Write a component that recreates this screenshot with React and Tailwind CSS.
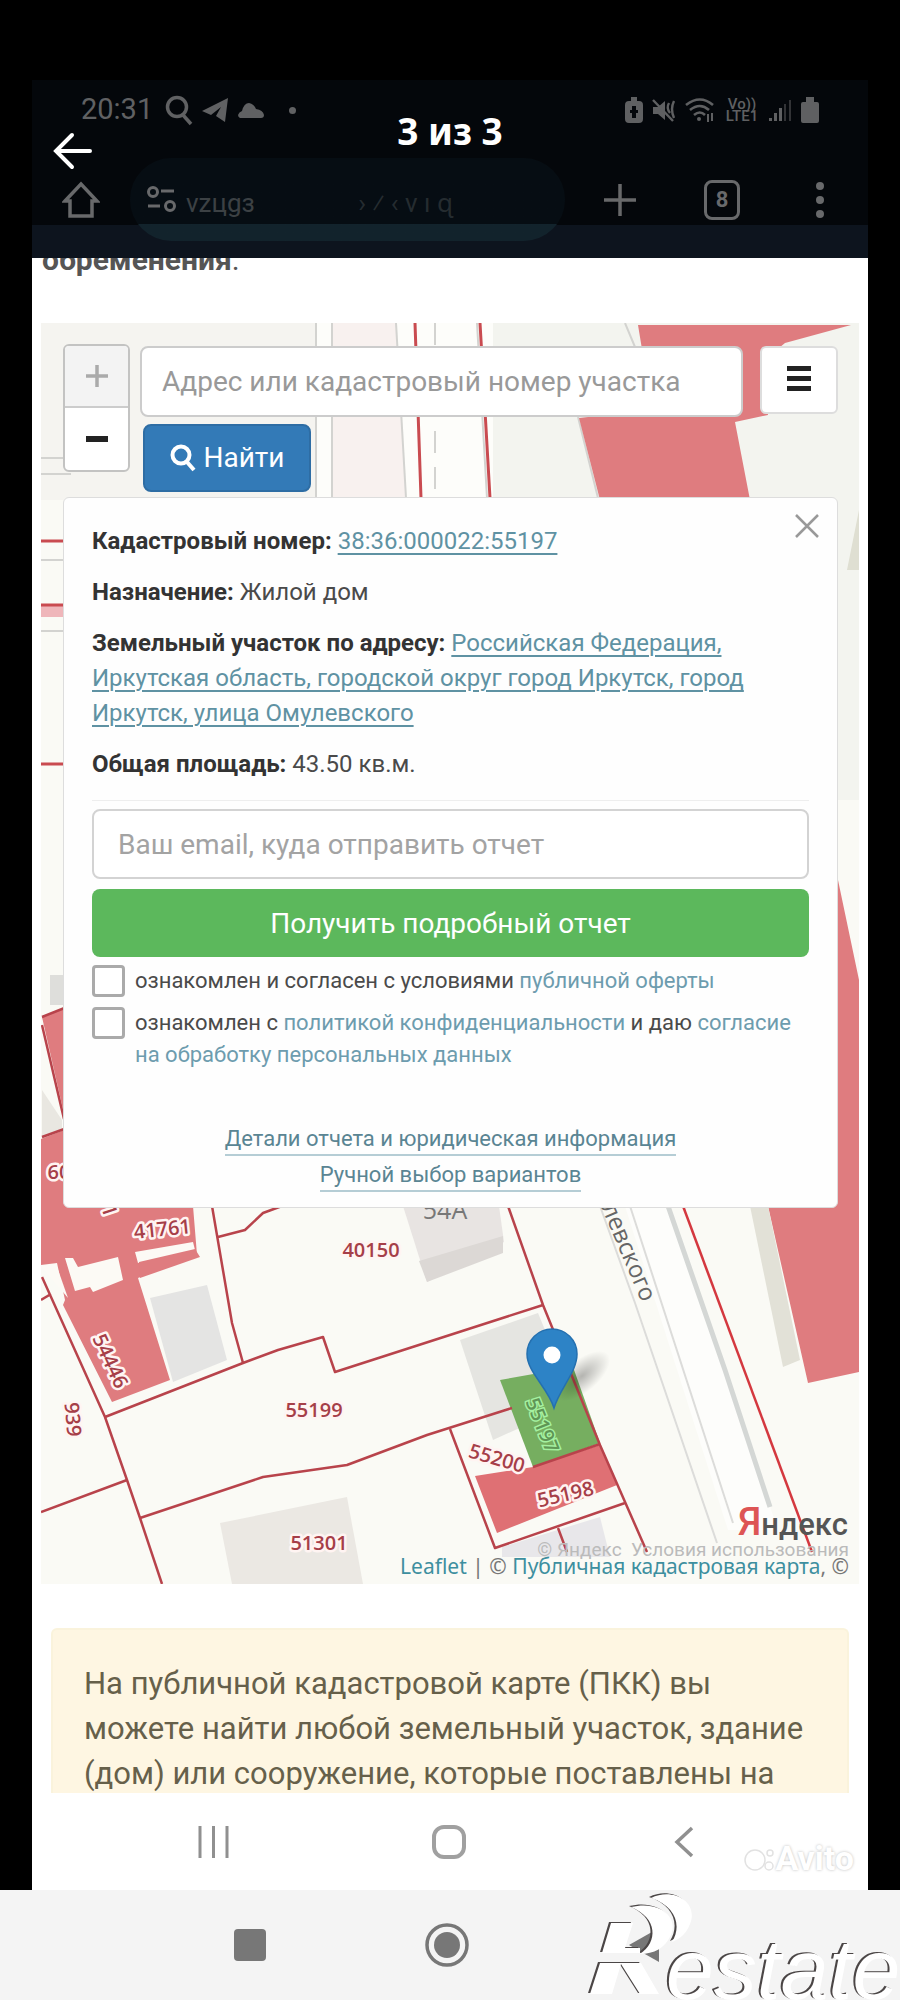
import React from "react";

function StatusIcons() {
  return (
    <div className="flex items-center gap-2 text-[#5f6062]">
      <svg className="h-7 w-5" viewBox="0 0 20 28" fill="currentColor" aria-hidden="true">
        <path fillRule="evenodd" d="M7 1h6v4h2q4 0 4 4v14q0 4-4 4H5q-4 0-4-4V9q0-4 4-4h2zM8 10v4H6v3h2v5h4v-5h2v-3h-2v-4z" />
      </svg>
      <svg className="h-7 w-6" viewBox="0 0 24 28" fill="currentColor" aria-hidden="true">
        <path d="M1 11h5l7-6v19l-7-6H1z" />
        <path d="M1 4l20 21M17 7q-3 5 1 10M22 5q-4 8 0 17" stroke="currentColor" strokeWidth="2.4" fill="none" />
      </svg>
      <svg className="h-7 w-8" viewBox="0 0 32 28" fill="none" stroke="currentColor" strokeWidth="2.6" aria-hidden="true">
        <path d="M2 9q14-11 27 0M6 14q10-8 19 0M10 19q6-5 11 0" />
        <circle cx="15" cy="23" r="2" fill="currentColor" stroke="none" />
        <path d="M24 18v8M28 17v8" strokeWidth="2" />
      </svg>
      <span className="w-9 text-center text-[15px] leading-3 font-medium">Vo)) LTE1</span>
      <svg className="h-6 w-6" viewBox="0 0 24 24" fill="currentColor" aria-hidden="true">
        <path d="M1 20h3v3H1zM6 15h3v8H6zM11 10h3v13h-3z" />
        <path d="M16 6h2v17h-2zM21 2h2v21h-2z" opacity=".5" />
      </svg>
      <svg className="h-7 w-5" viewBox="0 0 20 28" fill="currentColor" aria-hidden="true">
        <path d="M6 1h8v5h3q2 0 2 2v17q0 2-2 2H3q-2 0-2-2V8q0-2 2-2h3z" />
      </svg>
    </div>
  );
}

function PhoneHeader() {
  return (
    <header className="relative mx-8 h-[258px] bg-black pt-[84px]">
      <div className="absolute inset-x-0 bottom-0 h-[33px] bg-[#0d141e]" />
      <div className="absolute inset-x-0 top-20 bottom-[33px] bg-[#04070b]" />
      <div className="relative flex h-[52px] items-center justify-between pr-12 pl-[49px] text-[#606163]">
        <div className="flex items-center gap-2">
          <span className="mr-1 text-[29px]">20:31</span>
          <svg className="h-8 w-7" viewBox="0 0 28 32" fill="none" stroke="currentColor" strokeWidth="3.5" aria-hidden="true">
            <circle cx="12" cy="13" r="9.500" />
            <path d="M18 21l8 9" />
          </svg>
          <svg className="h-7 w-7" viewBox="0 0 28 28" fill="currentColor" aria-hidden="true">
            <path d="M1 15L27 2l-3 24-9-6 5-9-10 8z" />
          </svg>
          <svg className="h-6 w-7" viewBox="0 0 28 24" fill="currentColor" aria-hidden="true">
            <path d="M3 20q-2-1-2-3 1-3 4-4 2-8 7-8 5 1 7 6 7 1 8 6 0 3-3 3z" />
          </svg>
          <span className="ml-4 size-[7px] rounded-full bg-current" />
        </div>
        <StatusIcons />
      </div>
      <div className="relative mt-[22px] flex h-[83px] items-center pr-11 pl-[30px] text-[#68696b]">
        <button type="button" aria-label="Домой">
          <svg className="h-10 w-[38px]" viewBox="0 0 38 40" fill="none" stroke="currentColor" strokeWidth="3.5" aria-hidden="true">
            <path d="M3 21L19 4l16 17h-5v15H8V21z" />
          </svg>
        </button>
        <div className="ml-[30px] flex h-full w-[435px] items-center overflow-hidden rounded-[42px] bg-linear-to-b from-[#060d13] from-80% to-[#12232c] to-80% pl-4">
          <svg className="h-[30px] w-8 shrink-0" viewBox="0 0 32 30" fill="none" stroke="currentColor" strokeWidth="3" aria-hidden="true">
            <circle cx="7" cy="7" r="4.500" />
            <path d="M15 6h13M2 21h12" />
            <circle cx="24" cy="21" r="4.500" />
          </svg>
          <span className="mt-2 ml-2 text-[26px] text-[#3c4144]">vzцgз</span>
          <span className="mt-2 ml-auto pr-28 text-[26px] text-[#252c30]">› ⁄ ‹ v ı ɋ</span>
        </div>
        <div className="ml-auto flex items-center">
          <button type="button" aria-label="Новая вкладка" className="mr-[66px]">
            <svg className="size-9" viewBox="0 0 36 36" stroke="currentColor" strokeWidth="3.5" aria-hidden="true">
              <path d="M18 2v32M2 18h32" />
            </svg>
          </button>
          <button type="button" className="mr-[76px] flex h-10 w-9 items-center justify-center rounded-lg border-3 border-current text-[22px] font-bold">
            8
          </button>
          <button type="button" aria-label="Меню" className="flex flex-col gap-1.5">
            <span className="size-2 rounded-full bg-current" />
            <span className="size-2 rounded-full bg-current" />
            <span className="size-2 rounded-full bg-current" />
          </button>
        </div>
      </div>
      <div className="absolute inset-x-0 top-28 flex h-20 items-start justify-center">
        <button type="button" aria-label="Назад" className="absolute top-5 left-[21px] text-white">
          <svg className="h-10 w-10" viewBox="0 0 40 40" fill="none" stroke="currentColor" strokeWidth="4" strokeLinecap="round" aria-hidden="true">
            <path d="M37 19H4M19 3L3 19l16 16" />
          </svg>
        </button>
        <h1 className="font-['Noto_Sans','Open_Sans',sans-serif] text-[37px] leading-[38px] font-bold text-white">3 из 3</h1>
      </div>
    </header>
  );
}

function MapCanvas() {
  return (
    <svg
      className="absolute inset-0 h-full w-full"
      viewBox="41 323 818 1261"
      preserveAspectRatio="xMidYMin slice"
      fontFamily="'Open Sans','Noto Sans',sans-serif"
      aria-hidden="true"
    >
      <defs>
        <radialGradient id="pinShadow">
          <stop offset="0" stopColor="#000" stopOpacity=".28" />
          <stop offset="1" stopColor="#000" stopOpacity="0" />
        </radialGradient>
      </defs>
      <rect x="41" y="323" width="818" height="1261" fill="#fafaf5" />
      <path d="M41 323H316V500H41z" fill="#f5f4f0" />
      <path d="M492 323H859V800H492z" fill="#f3f4ef" />
      <path d="M316 323h16v177h-16zM397 323h96v177h-86z" fill="#fdfdfa" />
      <path d="M332 323h64l10 175h-74z" fill="#f8f1ef" />
      <g fill="none" stroke="#d3d3d0" strokeWidth="2">
        <path d="M316 323v177M332 323v177M396 323l10 175M477 323l10 175M41 458h30M41 474h30M41 560h30M41 631h30M625 323l10 24M578 417l20 81" />
        <path d="M435 323v175" strokeDasharray="22 14" />
      </g>
      <path d="M638 325H851L785 343 762 362 768 415 735 422 750 500H600L579 418 652 410z" fill="#df7c7f" />
      <path d="M859 510l-12 60h12z" fill="#dfdfd2" />
      <path d="M41 605h30v12H41z" fill="#efb6ba" />
      <g fill="none" stroke="#c94b50" strokeWidth="3">
        <path d="M415 323l6 175M480 323l10 175M41 541h30M41 605h30M41 764h30" />
      </g>

      <path d="M838 880L859 980V1372L808 1383 768 1206H830z" fill="#df7c7f" />
      <path d="M750 1206H768L800 1360 783 1367z" fill="#e2e1d7" />
      <path d="M625 1206H668L778 1530H728z" fill="#fdfdfb" />
      <g fill="none" stroke="#dcdcda" strokeWidth="2">
        <path d="M600 1206L635 1303 717 1543M630 1206L733 1523" />
      </g>
      <path d="M668 1206L725 1370 770 1507" fill="none" stroke="#d4d7d5" strokeWidth="5" />
      <path d="M683 1206L812 1552" fill="none" stroke="#d4383f" strokeWidth="2.5" />

      <path d="M50 975h20v30H50z" fill="#dededb" />
      <path d="M42 1090l20 30v30H42z" fill="#e9e7e1" />
      <path d="M42 1017l25-10v120z" fill="#df7c7f" />
      <path d="M41 1139l26-10v77h126l4 49-59 23 32 102-58 22-49-97 2-5-8-37-16 2z" fill="#df7c7f" />
      <path d="M65 1258h8l5 9 40-10 5 23-30 12-3-5-15 4zM135 1252l58-10 2 8-57 13z" fill="#fcfaf5" />
      <path d="M139 1262l56-13 5 8-60 21z" fill="#df7c7f" />
      <path d="M41 1266l15-2 12 34z" fill="#fcfaf5" />
      <path d="M150 1298L207 1285 227 1360 173 1382z" fill="#e4e4e3" />
      <path d="M403 1206H499L504 1242 427 1282z" fill="#e8e4e2" />
      <path d="M419 1261L503 1236V1253L427 1282z" fill="#dcd8d5" />
      <path d="M460 1340L538 1313 575 1403 493 1440z" fill="#e5e5e1" />
      <path d="M220 1523L347 1497 363 1584H232z" fill="#ebe8e3" />
      <path d="M502 1547l98-30 10 40H502z" fill="#e8e7ea" />
      <path d="M475 1476L533 1467 600 1445 617 1485 497 1533z" fill="#df7074" />
      <path d="M500 1380L573 1367 600 1443 533 1467z" fill="#76ae60" />

      <g fill="none" stroke="#b8434b" strokeWidth="2.5" strokeLinejoin="round">
        <path d="M42 1277L105 1417 127 1480 140 1518 162 1584M41 1300l10-6" />
        <path d="M105 1417L243 1363 278 1350 323 1337 335 1372 543 1305" />
        <path d="M212 1206L232 1323 243 1363M218 1237L245 1230 263 1213 282 1206" />
        <path d="M41 1512L127 1480M140 1518L263 1477 347 1465 427 1435 512 1408" />
        <path d="M508 1206L543 1305 600 1445 647 1552M450 1429L495 1548 625 1503M558 1528l9 24" />
        <path d="M42 1017l25-10M42 1137l25-9M42 1025l22 94M533 1467l67-23" />
      </g>

      <g fill="#a63e48" stroke="#fff4f2" strokeWidth="5" strokeLinejoin="round" paintOrder="stroke" fontSize="20" fontWeight="600" textAnchor="middle">
        <text x="371" y="1257">40150</text>
        <text x="314" y="1417">55199</text>
        <text x="319" y="1550">51301</text>
        <text x="163" y="1236" transform="rotate(-6 163 1236)">41761</text>
        <text transform="translate(104 1364) rotate(65)">54446</text>
        <text transform="translate(66 1420) rotate(85)">939</text>
        <text x="59" y="1179">60</text>
        <text transform="translate(101 1207) rotate(72)">41</text>
        <text transform="translate(495 1465) rotate(16)">55200</text>
        <text transform="translate(567 1501) rotate(-13)">55198</text>
      </g>
      <text transform="translate(536 1428) rotate(68)" fill="#5f9655" stroke="#a5f1a0" strokeWidth="3" paintOrder="stroke" fontSize="20" fontWeight="600" textAnchor="middle">55197</text>
      <text x="445" y="1219" fill="#777" fontSize="25" textAnchor="middle">54А</text>
      <text transform="translate(642 1303) rotate(67)" fill="#666" fontSize="24" textAnchor="end">улица Омулевского</text>

      <ellipse cx="582" cy="1376" rx="34" ry="16" fill="url(#pinShadow)" transform="rotate(-40 582 1376)" />
      <path d="M554 1408C548 1388 527 1372 527 1354a25 25 0 0 1 50 0C577 1372 560 1388 554 1408z" fill="#2d83c6" stroke="#2470b0" strokeWidth="1.500" />
      <circle cx="552" cy="1355" r="8.500" fill="#fff" />
      <text x="738" y="1535" fontFamily="Roboto,sans-serif" fontSize="31" fontWeight="500" fill="#555"><tspan fill="#dd5555" fontSize="38">Я</tspan>ндекс</text>
    </svg>
  );
}

function SearchBar() {
  return (
    <form className="relative flex items-start pt-[21px] pr-[21px] pl-[22px]" onSubmit={(e) => e.preventDefault()}>
      <div className="flex w-[67px] flex-col rounded-md border-2 border-[#c3c3c2] bg-white">
        <button type="button" aria-label="Приблизить" className="flex h-[62px] items-center justify-center rounded-t border-b-2 border-[#ccc] bg-[#f3f3f3] text-[#aaa]">
          <svg className="size-[22px]" viewBox="0 0 22 22" stroke="currentColor" strokeWidth="3.5" aria-hidden="true"><path d="M11 0v22M0 11h22" /></svg>
        </button>
        <button type="button" aria-label="Отдалить" className="flex h-[62px] items-center justify-center">
          <span className="h-1.5 w-[22px] bg-[#222]" />
        </button>
      </div>
      <div className="ml-2.5 flex min-w-0 flex-1 flex-col items-start gap-[7px] pt-0.5">
        <input
          type="text"
          aria-label="Адрес или кадастровый номер участка"
          placeholder="Адрес или кадастровый номер участка"
          className="h-[71px] w-full rounded-lg border-2 border-[#ccc] bg-white px-5 text-[28px] placeholder:text-[#999]"
        />
        <button type="submit" className="ml-[3px] flex h-[68px] w-[168px] items-center justify-center gap-2 rounded-lg border-2 border-[#2e6da4] bg-[#337ab7] text-[28px] text-white">
          <svg className="h-7 w-[26px]" viewBox="0 0 26 28" fill="none" stroke="currentColor" strokeWidth="4" aria-hidden="true">
            <circle cx="11" cy="11" r="8.500" />
            <path d="M17 18l7 8" />
          </svg>
          Найти
        </button>
      </div>
      <button type="button" aria-label="Слои" className="mt-0.5 ml-[17px] flex h-[68px] w-[78px] flex-col items-center justify-center gap-[5px] rounded-md border-2 border-[#ddd] bg-white pb-1">
        <span className="h-[5px] w-6 bg-[#222]" />
        <span className="h-[5px] w-6 bg-[#222]" />
        <span className="h-[5px] w-6 bg-[#222]" />
      </button>
    </form>
  );
}

function InfoCard() {
  const link = "text-[#5f92a3] underline decoration-2 underline-offset-4";
  const soft = "text-[#6d9cae]";
  return (
    <section className="relative mt-[5px] mr-[21px] ml-[22px] rounded-md border border-[#ddd] bg-[#fefefe] px-7 pt-[26px] pb-[15px] text-[24px] leading-[35px] text-[#4a4a4a]">
      <button type="button" aria-label="Закрыть" className="absolute top-4 right-[18px] text-[#999]">
        <svg className="size-6" viewBox="0 0 24 24" stroke="currentColor" strokeWidth="2.500" aria-hidden="true"><path d="M1 1l22 22M23 1L1 23" /></svg>
      </button>
      <div className="flex flex-col gap-4">
        <p><b className="text-[#333]">Кадастровый номер:</b> <a href="#number" className={link}>38:36:000022:55197</a></p>
        <p><b className="text-[#333]">Назначение:</b> Жилой дом</p>
        <p>
          <b className="text-[#333]">Земельный участок по адресу:</b>{" "}
          <a href="#address" className={link}>Российская Федерация, Иркутская область, городской округ город Иркутск, город Иркутск, улица Омулевского</a>
        </p>
        <p><b className="text-[#333]">Общая площадь:</b> 43.50 кв.м.</p>
      </div>
      <hr className="mt-[18px] mb-2 border-[#eee]" />
      <form onSubmit={(e) => e.preventDefault()}>
        <input
          type="email"
          aria-label="Ваш email"
          placeholder="Ваш email, куда отправить отчет"
          className="block h-[70px] w-full rounded-lg border-2 border-[#d3d3d3] bg-white px-6 text-[28px] placeholder:text-[#a3a3a3]"
        />
        <button type="submit" className="mt-2.5 block h-[68px] w-full rounded-lg bg-[#5cb85c] text-[28px] text-white">
          Получить подробный отчет
        </button>
        <div className="mt-2 flex flex-col gap-2.5 text-[22px] leading-8">
          <div className="flex items-start gap-2.5">
            <input id="offer" type="checkbox" className="h-8 w-[33px] shrink-0 appearance-none rounded-sm border-3 border-[#aaa] bg-white" />
            <label htmlFor="offer">ознакомлен и согласен с условиями <a href="#offer" className={soft}>публичной оферты</a></label>
          </div>
          <div className="flex items-start gap-2.5">
            <input id="policy" type="checkbox" className="h-8 w-[33px] shrink-0 appearance-none rounded-sm border-3 border-[#aaa] bg-white" />
            <label htmlFor="policy">
              ознакомлен с <a href="#policy" className={soft}>политикой конфиденциальности</a> и даю <a href="#consent" className={soft}>согласие на обработку персональных данных</a>
            </label>
          </div>
        </div>
      </form>
      <div className="mt-[53px] flex flex-col items-center gap-1 text-[22px] leading-[30px] text-[#5a8593]">
        <a href="#details" className="border-b-2 border-[#b5cdd5]">Детали отчета и юридическая информация</a>
        <a href="#manual" className="border-b-2 border-[#b5cdd5]">Ручной выбор вариантов</a>
      </div>
    </section>
  );
}

function RestateLogo() {
  return (
    <svg className="absolute right-0 bottom-0 h-[112px] w-[320px]" viewBox="580 1888 320 112" role="img" aria-label="Restate">
      <g fill="#fff" className="[filter:drop-shadow(-2px_-1px_0_#4b4646)]">
        <path d="M611 1923h22l-8 25h15v5h-38z" />
        <path d="M600 1963h41l18 31h-19l-19-30-9 30h-22z" />
        <path d="M631 1907c28-7 48 10 40 28-6 13-17 19-31 19 18-12 18-36-9-47z" />
        <path d="M651 1898c22-11 48 4 39 26-4 10-9 14-18 18 10-16 4-36-21-44z" />
      </g>
      <text x="666" y="1999" fontFamily="'Liberation Sans',Arial,sans-serif" fontSize="86" fontStyle="italic" fill="#fff" className="[filter:drop-shadow(-2px_-1px_0_#4b4646)]">estate</text>
    </svg>
  );
}

export default function App() {
  return (
    <div className="flex min-h-screen flex-col bg-black font-['Roboto','Noto_Sans',sans-serif]">
      <PhoneHeader />
      <main className="mx-8 flex flex-1 flex-col bg-white">
        <div className="h-[65px] overflow-hidden px-2.5">
          <p className="text-[30px] leading-1 font-bold text-[#555]">обременения<span className="font-normal">.</span></p>
        </div>
        <div className="relative mx-[9px] flex min-h-[1261px] flex-col overflow-hidden">
          <MapCanvas />
          <SearchBar />
          <InfoCard />
          <footer className="relative mt-auto pr-2.5 text-right font-['Noto_Sans','Open_Sans',sans-serif] text-[21px] leading-9 whitespace-nowrap text-[#777]">
            <p className="absolute right-2.5 -top-4 font-['Roboto',sans-serif] text-[19px] text-[#bbb]">© Яндекс &nbsp;Условия использования</p>
            <p className="relative"><a href="#leaflet" className="text-[#3d8f9f]">Leaflet</a> | © <a href="#map" className="text-[#3d8f9f]">Публичная кадастровая карта</a>, ©</p>
          </footer>
        </div>
        <div className="mx-[19px] mt-11 h-[165px] overflow-hidden rounded-t-md border-2 border-b-0 border-[#faf3dc] bg-[#fef6e2] pt-[31px] pr-7 pl-[31px]">
          <p className="text-[31px] leading-[45px] text-[#66604a]">На публичной кадастровой карте (ПКК) вы можете найти любой земельный участок, здание (дом) или сооружение, которые поставлены на</p>
        </div>
        <div className="relative flex h-[97px] items-center justify-between pr-[168px] pl-[166px] text-[#909090]">
          <button type="button" aria-label="Недавние">
            <svg className="h-8 w-[31px]" viewBox="0 0 31 32" stroke="currentColor" strokeWidth="3" aria-hidden="true"><path d="M2 0v32M15.500 0v32M29 0v32" /></svg>
          </button>
          <button type="button" aria-label="Главный экран" className="h-[34px] w-[34px] rounded-xl border-4 border-[#a0a0a0]" />
          <button type="button" aria-label="Назад" className="flex w-8 justify-center">
            <svg className="h-8 w-5" viewBox="0 0 20 32" fill="none" stroke="currentColor" strokeWidth="3.500" aria-hidden="true"><path d="M18 2L3 16l15 14" /></svg>
          </button>
          <div className="absolute right-3.5 bottom-1.5 flex items-center text-[34px] font-bold text-white [text-shadow:0_0_3px_#bbb]">
            <svg className="size-8" viewBox="0 0 32 32" fill="#fff" stroke="#e2e2e2" strokeWidth="1.500" aria-hidden="true">
              <circle cx="11" cy="17" r="10" /><circle cx="26" cy="10" r="3" /><circle cx="25" cy="23" r="4" />
            </svg>
            Avito
          </div>
        </div>
      </main>
      <nav className="relative flex h-[110px] items-center justify-center gap-[158px] bg-[#f4f4f4] pr-[6px] text-[#777]">
        <button type="button" aria-label="Обзор" className="size-8 rounded-sm bg-[#777]" />
        <button type="button" aria-label="Домой">
          <svg className="size-[46px]" viewBox="0 0 46 46" fill="none" stroke="currentColor" strokeWidth="3.500" aria-hidden="true"><circle cx="23" cy="23" r="20" /><circle cx="23" cy="23" r="13" fill="currentColor" stroke="none" /></svg>
        </button>
        <button type="button" aria-label="Назад">
          <svg className="h-9 w-8" viewBox="0 0 32 36" fill="currentColor" aria-hidden="true"><path d="M1 18L31 1v34z" /></svg>
        </button>
        <RestateLogo />
      </nav>
    </div>
  );
}
